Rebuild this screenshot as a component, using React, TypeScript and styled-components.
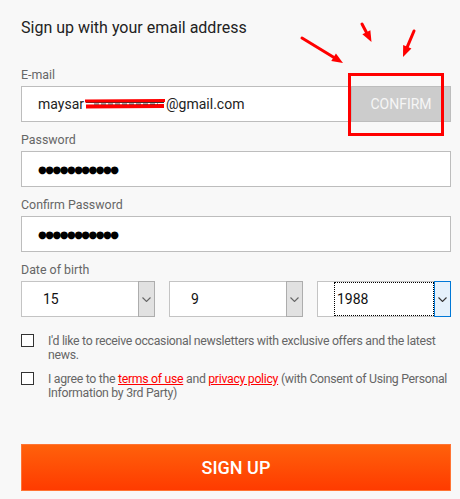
import React from "react";
import styled, { createGlobalStyle, css } from "styled-components";

const GlobalStyle = createGlobalStyle`
  html, body { margin: 0; padding: 0; background: #f8f8f8; }
  body { font-family: Roboto, "Liberation Sans", Arial, sans-serif; }
  * { box-sizing: border-box; }
`;

const Page = styled.div`
  position: relative;
  width: 460px;
  height: 499px;
  padding: 18px 9px 0 21px;
  overflow: hidden;
  background: #f8f8f8;
`;

const Title = styled.h1`
  margin: 0;
  font-size: 16px;
  line-height: 20px;
  font-weight: 400;
  color: #222;
`;

const Fields = styled.div`
  display: flex;
  flex-direction: column;
  gap: 10px;
  margin-top: 29px;
`;

const Field = styled.div`
  display: flex;
  flex-direction: column;
`;

const Label = styled.div`
  font-size: 12.4px;
  line-height: 16px;
  color: #666;
  margin-bottom: 3px;
`;

const EmailRow = styled.div`
  display: flex;
`;

const TextBox = styled.div`
  flex: 1 1 auto;
  min-width: 0;
  height: 36px;
  border: 1px solid #bdbdbd;
  background: #fff;
  padding-left: 16px;
  display: flex;
  align-items: center;
  font-size: 14px;
  color: #222;
  white-space: nowrap;
`;

const Dots = styled.span`
  font-family: "DejaVu Sans", sans-serif;
  font-size: 10px;
  letter-spacing: -1.5px;
  color: #000;
`;

const ConfirmButton = styled.button`
  flex: none;
  width: 99px;
  height: 36px;
  background: #cccccc;
  border: 1px solid #bdbdbd;
  border-left: none;
  color: #f6f6f6;
  font-family: Roboto, sans-serif;
  font-size: 14px;
  padding: 0;
`;

const DateGrid = styled.div`
  display: grid;
  grid-template-columns: repeat(3, 1fr);
  gap: 14px;
`;

const SelectBox = styled.div`
  height: 36px;
  border: 1px solid #c4c4c4;
  background: #fff;
  display: flex;
`;

const SelectValue = styled.div<{ $focused?: boolean }>`
  flex: 1;
  display: flex;
  align-items: center;
  font-size: 14px;
  color: #111;
  padding-left: 21px;
  ${(p) =>
    p.$focused &&
    css`
      margin-left: 16px;
      padding-left: 2px;
      border: 1px dotted #000;
    `}
`;

const SelectArrow = styled.div<{ $focused?: boolean }>`
  width: 17px;
  margin: -1px -1px -1px 0;
  display: flex;
  align-items: center;
  justify-content: center;
  background: ${(p) => (p.$focused ? "#e5f1fb" : "#e1e1e1")};
  border: 1px solid ${(p) => (p.$focused ? "#0078d7" : "#adadad")};
`;

const Checks = styled.div`
  display: flex;
  flex-direction: column;
  gap: 10px;
  margin-top: 17px;
`;

const CheckRow = styled.label`
  display: flex;
  gap: 14px;
  align-items: flex-start;
`;

const CheckBox = styled.span`
  flex: none;
  width: 13px;
  height: 13px;
  border: 1px solid #333;
  background: #fff;
`;

const CheckText = styled.span`
  font-size: 12.3px;
  letter-spacing: -0.3px;
  line-height: 14px;
  color: #666;
`;

const Link = styled.a`
  color: #ff0000;
  text-decoration: underline;
`;

const SignUpButton = styled.button`
  display: block;
  width: 100%;
  height: 47px;
  margin-top: 44px;
  background: linear-gradient(#ff610b, #ff3b00);
  border: 1px solid #ff7434;
  color: #fff;
  font-family: Roboto, sans-serif;
  font-size: 18px;
  font-weight: 500;
  padding: 0;
`;

const Overlay = styled.svg`
  position: absolute;
  left: 0;
  top: 0;
  pointer-events: none;
`;

const Scribble = styled.svg`
  vertical-align: -3px;
`;

const Chevron = ({ color }: { color: string }) => (
  <svg width="9" height="5" viewBox="0 0 9 5">
    <polyline points="0.5,0.5 4.5,4.5 8.5,0.5" fill="none" stroke={color} strokeWidth="1.1" />
  </svg>
);

const Arrow = ({ x1, y1, x2, y2 }: { x1: number; y1: number; x2: number; y2: number }) => {
  const dx = x2 - x1;
  const dy = y2 - y1;
  const len = Math.hypot(dx, dy);
  const ux = dx / len;
  const uy = dy / len;
  const hl = 11;
  const hw = 4.5;
  const bx = x2 - ux * hl;
  const by = y2 - uy * hl;
  const px = -uy;
  const py = ux;
  return (
    <g>
      <line x1={x1} y1={y1} x2={bx} y2={by} stroke="#f00" strokeWidth="3" strokeLinecap="round" />
      <polygon
        points={`${x2},${y2} ${bx + px * hw},${by + py * hw} ${bx - px * hw},${by - py * hw}`}
        fill="#f00"
      />
    </g>
  );
};

const selects = [
  { value: "15", focused: false },
  { value: "9", focused: false },
  { value: "1988", focused: true },
];

export default function App() {
  return (
    <Page>
      <GlobalStyle />
      <Title>Sign up with your email address</Title>
      <Fields>
        <Field>
          <Label>E-mail</Label>
          <EmailRow>
            <TextBox>
              maysar
              <Scribble width="82" height="12" viewBox="0 0 82 12">
                <line x1="2" y1="4.5" x2="80" y2="4.5" stroke="#333" strokeWidth="1" />
                <path d="M1 3 L81 2.5" stroke="#f00" strokeWidth="3" />
                <path d="M2 8.5 L80 8" stroke="#f00" strokeWidth="4" />
                <line x1="10" y1="6" x2="74" y2="6" stroke="#222" strokeWidth="0.8" strokeDasharray="5 2" />
              </Scribble>
              @gmail.com
            </TextBox>
            <ConfirmButton>CONFIRM</ConfirmButton>
          </EmailRow>
        </Field>
        <Field>
          <Label>Password</Label>
          <TextBox>
            <Dots>●●●●●●●●●●●</Dots>
          </TextBox>
        </Field>
        <Field>
          <Label>Confirm Password</Label>
          <TextBox>
            <Dots>●●●●●●●●●●●</Dots>
          </TextBox>
        </Field>
        <Field>
          <Label>Date of birth</Label>
          <DateGrid>
            {selects.map((s) => (
              <SelectBox key={s.value}>
                <SelectValue $focused={s.focused}>{s.value}</SelectValue>
                <SelectArrow $focused={s.focused}>
                  <Chevron color={s.focused ? "#333" : "#666"} />
                </SelectArrow>
              </SelectBox>
            ))}
          </DateGrid>
        </Field>
      </Fields>
      <Checks>
        <CheckRow>
          <CheckBox />
          <CheckText>
            I'd like to receive occasional newsletters with exclusive offers and the latest news.
          </CheckText>
        </CheckRow>
        <CheckRow>
          <CheckBox />
          <CheckText>
            I agree to the <Link>terms of use</Link> and <Link>privacy policy</Link> (with Consent of
            Using Personal Information by 3rd Party)
          </CheckText>
        </CheckRow>
      </Checks>
      <SignUpButton>SIGN UP</SignUpButton>
      <Overlay width="460" height="499" viewBox="0 0 460 499">
        <rect x="349.5" y="74.5" width="93" height="60" fill="none" stroke="#f00" strokeWidth="3" />
        <Arrow x1={302} y1={38} x2={343} y2={63} />
        <Arrow x1={362} y1={24} x2={371.5} y2={42} />
        <Arrow x1={414} y1={31} x2={403} y2={57} />
      </Overlay>
    </Page>
  );
}
